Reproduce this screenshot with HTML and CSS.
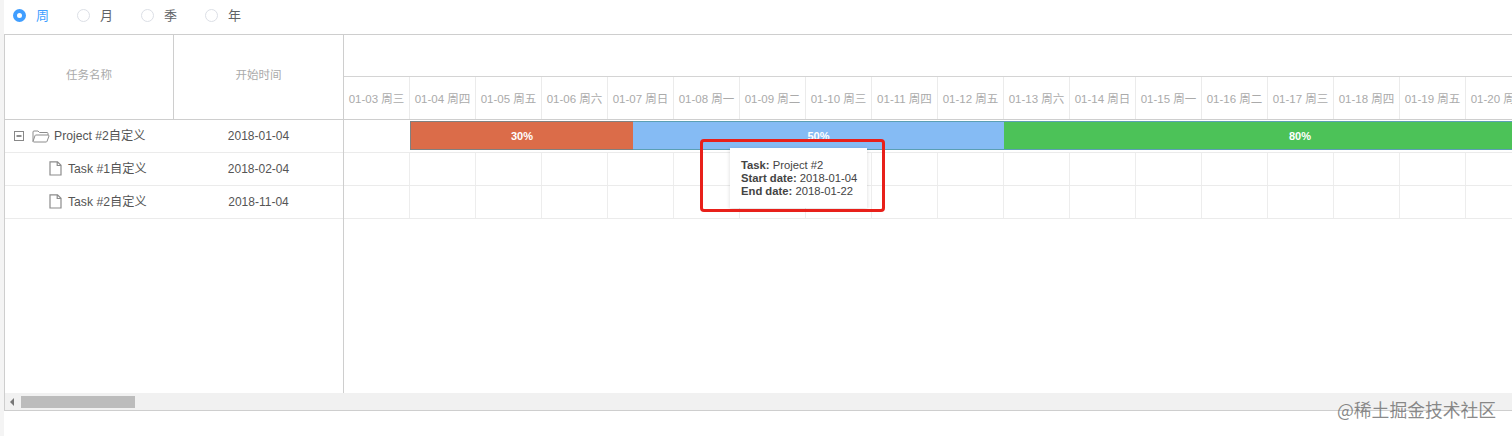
FILE: index.html
```html
<!DOCTYPE html>
<html lang="zh">
<head>
<meta charset="utf-8">
<title>Gantt</title>
<link rel="stylesheet" href="styles.css">
</head>
<body>
<div class="radios">
  <label class="radio active"><span class="dot"></span><span>周</span></label>
  <label class="radio"><span class="dot"></span><span>月</span></label>
  <label class="radio"><span class="dot"></span><span>季</span></label>
  <label class="radio"><span class="dot"></span><span>年</span></label>
</div>
<div class="gantt">
  <div class="main">
    <div class="grid">
      <div class="grid-head">
        <div class="head-cell name">任务名称</div>
        <div class="head-cell start">开始时间</div>
      </div>
      <div class="grid-row">
        <div class="col-name">
          <svg class="toggle" width="10" height="10" viewBox="0 0 10 10"><rect x=".5" y=".5" width="9" height="9" fill="#fff" stroke="#888"/><path d="M2.5 5h5" stroke="#444" stroke-width="1.2"/></svg>
          <svg class="folder" width="18" height="14" viewBox="0 0 18 14"><path d="M1 12.5V3a1 1 0 0 1 1-1h4l1.5 1.5H15a1 1 0 0 1 1 1V6M1 12.5a1 1 0 0 0 1 .5h12a1 1 0 0 0 1-.6L17 7a1 1 0 0 0-1-1H4a1 1 0 0 0-1 .6L1 12.5z" fill="none" stroke="#8c8c8c"/></svg>
          <span>Project #2自定义</span>
        </div>
        <div class="col-start">2018-01-04</div>
      </div>
      <div class="grid-row">
        <div class="col-name child">
          <svg class="file" width="13" height="15" viewBox="0 0 13 15"><path d="M1 .8h7.5L12 4.3V14H1zM8.2 1v3.5H12" fill="none" stroke="#8c8c8c" stroke-width="1.2"/></svg>
          <span>Task #1自定义</span>
        </div>
        <div class="col-start">2018-02-04</div>
      </div>
      <div class="grid-row">
        <div class="col-name child">
          <svg class="file" width="13" height="15" viewBox="0 0 13 15"><path d="M1 .8h7.5L12 4.3V14H1zM8.2 1v3.5H12" fill="none" stroke="#8c8c8c" stroke-width="1.2"/></svg>
          <span>Task #2自定义</span>
        </div>
        <div class="col-start">2018-11-04</div>
      </div>
    </div>
    <div class="timeline">
      <div class="scale-top"></div>
      <div class="scale">
        <div class="scale-cell">01-03 周三</div>
        <div class="scale-cell">01-04 周四</div>
        <div class="scale-cell">01-05 周五</div>
        <div class="scale-cell">01-06 周六</div>
        <div class="scale-cell">01-07 周日</div>
        <div class="scale-cell">01-08 周一</div>
        <div class="scale-cell">01-09 周二</div>
        <div class="scale-cell">01-10 周三</div>
        <div class="scale-cell">01-11 周四</div>
        <div class="scale-cell">01-12 周五</div>
        <div class="scale-cell">01-13 周六</div>
        <div class="scale-cell">01-14 周日</div>
        <div class="scale-cell">01-15 周一</div>
        <div class="scale-cell">01-16 周二</div>
        <div class="scale-cell">01-17 周三</div>
        <div class="scale-cell">01-18 周四</div>
        <div class="scale-cell">01-19 周五</div>
        <div class="scale-cell">01-20 周六</div>
      </div>
      <div class="bar-row">
        <div class="bar">
          <div class="seg orange">30%</div>
          <div class="seg blue">50%</div>
          <div class="seg green">80%</div>
        </div>
      </div>
      <div class="cal-row">
        <i></i><i></i><i></i><i></i><i></i><i></i><i></i><i></i><i></i><i></i><i></i><i></i><i></i><i></i><i></i><i></i><i></i><i></i>
      </div>
      <div class="cal-row">
        <i></i><i></i><i></i><i></i><i></i><i></i><i></i><i></i><i></i><i></i><i></i><i></i><i></i><i></i><i></i><i></i><i></i><i></i>
      </div>
    </div>
  </div>
  <div class="scrollbar">
    <span class="arrow"></span>
    <span class="thumb"></span>
  </div>
</div>
<div class="tooltip">
  <div><b>Task:</b> Project #2</div>
  <div><b>Start date:</b> 2018-01-04</div>
  <div><b>End date:</b> 2018-01-22</div>
</div>
<div class="redbox"></div>
<div class="watermark">@稀土掘金技术社区</div>
</body>
</html>
```
FILE: styles.css
```css
html, body { margin: 0; padding: 0; }
body {
  width: 1512px;
  height: 436px;
  overflow: hidden;
  background: linear-gradient(to right, #f4f4f4 4px, #fff 4px);
  font-family: "Liberation Sans", "Noto Sans CJK SC", sans-serif;
  font-size: 12px;
  color: #555;
  position: relative;
}
.radios {
  display: flex;
  height: 34px;
  align-items: center;
  padding-left: 13px;
  box-sizing: border-box;
  padding-bottom: 3px;
}
.radio {
  display: flex;
  align-items: center;
  width: 64px;
  gap: 10px;
  font-size: 13px;
  line-height: 14px;
  color: #606266;
}
.dot {
  width: 13px;
  height: 13px;
  box-sizing: border-box;
  border: 1px solid #dcdfe6;
  border-radius: 50%;
  background: #fff;
}
.radio.active { color: #409eff; }
.radio.active .dot {
  border: 4px solid #409eff;
  background: #fff;
}
.gantt {
  margin-left: 4px;
  height: 377px;
  box-sizing: border-box;
  border: 1px solid #cecece;
  border-right: 0;
  display: flex;
  flex-direction: column;
  background: #fff;
}
.main {
  display: flex;
  flex: 1;
  min-height: 0;
  overflow: hidden;
}
.grid {
  width: 339px;
  flex: none;
  box-sizing: border-box;
  border-right: 1px solid #cecece;
}
.grid-head {
  display: flex;
  height: 85px;
  box-sizing: border-box;
  border-bottom: 1px solid #cecece;
}
.head-cell {
  display: flex;
  align-items: center;
  justify-content: center;
  padding-bottom: 4px;
  box-sizing: border-box;
  color: #aaa;
  font-size: 11.5px;
  line-height: 14px;
}
.head-cell.name { width: 169px; border-right: 1px solid #cecece; }
.head-cell.start { flex: 1; }
.grid-row {
  display: flex;
  height: 33px;
  box-sizing: border-box;
  border-bottom: 1px solid #ebebeb;
  align-items: center;
}
.col-name {
  width: 169px;
  display: flex;
  align-items: center;
  padding-left: 9px;
  box-sizing: border-box;
  color: #555;
  font-size: 12.2px;
  line-height: 14px;
  padding-bottom: 1px;
}
.col-name.child { padding-left: 44px; }
.toggle { margin-right: 8px; flex: none; }
.folder { margin-right: 4px; flex: none; }
.file { margin-right: 6px; flex: none; }
.col-start {
  flex: 1;
  text-align: center;
  color: #555;
}
.timeline {
  flex: 1;
  min-width: 0;
  overflow: hidden;
}
.scale-top {
  height: 42px;
  box-sizing: border-box;
  border-bottom: 1px solid #d4d4d4;
}
.scale {
  display: flex;
  height: 43px;
  box-sizing: border-box;
  border-bottom: 1px solid #cecece;
}
.scale-cell {
  flex: none;
  width: 66px;
  box-sizing: border-box;
  border-right: 1px solid #ebebeb;
  display: flex;
  align-items: center;
  justify-content: center;
  white-space: nowrap;
  color: #aaa;
  font-size: 11.5px;
  padding-bottom: 1px;
}
.bar-row {
  height: 33px;
  box-sizing: border-box;
  padding: 1px 0 2px 66px;
  border-bottom: 1px solid #ebebeb;
}
.bar {
  display: flex;
  width: 1186px;
  height: 29px;
}
.seg {
  flex: none;
  box-sizing: border-box;
  border: solid #5b9fb4;
  border-width: 1px 0;
  display: flex;
  align-items: center;
  justify-content: center;
  color: #fff;
  font-weight: bold;
  font-size: 11px;
}
.orange {
  width: 223px;
  background: #db6c49;
  border-color: #808080;
  border-left-width: 1px;
}
.blue { width: 371px; background: #85bbf4; }
.green { width: 592px; background: #4cc258; }
.cal-row {
  display: flex;
  height: 33px;
  box-sizing: border-box;
  border-bottom: 1px solid #ebebeb;
}
.cal-row i {
  flex: none;
  width: 66px;
  box-sizing: border-box;
  border-right: 1px solid #ededed;
}
.scrollbar {
  height: 17px;
  flex: none;
  background: #f1f1f1;
  display: flex;
  align-items: center;
  padding-left: 5px;
  gap: 7px;
}
.arrow {
  width: 0;
  height: 0;
  border-style: solid;
  border-width: 4px 4px 4px 0;
  border-color: transparent #777 transparent transparent;
}
.thumb {
  width: 114px;
  height: 12px;
  background: #bcbcbc;
}
.tooltip {
  position: absolute;
  left: 730px;
  top: 148px;
  width: 137px;
  height: 60px;
  box-sizing: border-box;
  padding: 11px 0 0 11px;
  background: #fff;
  box-shadow: 0 1px 4px rgba(0, 0, 0, .15);
  font-size: 11.25px;
  line-height: 13px;
  color: #444;
  white-space: nowrap;
}
.redbox {
  position: absolute;
  left: 700px;
  top: 139px;
  width: 185px;
  height: 73px;
  box-sizing: border-box;
  border: 3px solid #e8201a;
  border-radius: 4px;
}
.watermark {
  position: absolute;
  left: 1337px;
  top: 395px;
  font-family: "Noto Sans CJK SC", sans-serif;
  font-size: 17.8px;
  line-height: 29px;
  color: rgba(100, 100, 100, .75);
  white-space: nowrap;
}
```
